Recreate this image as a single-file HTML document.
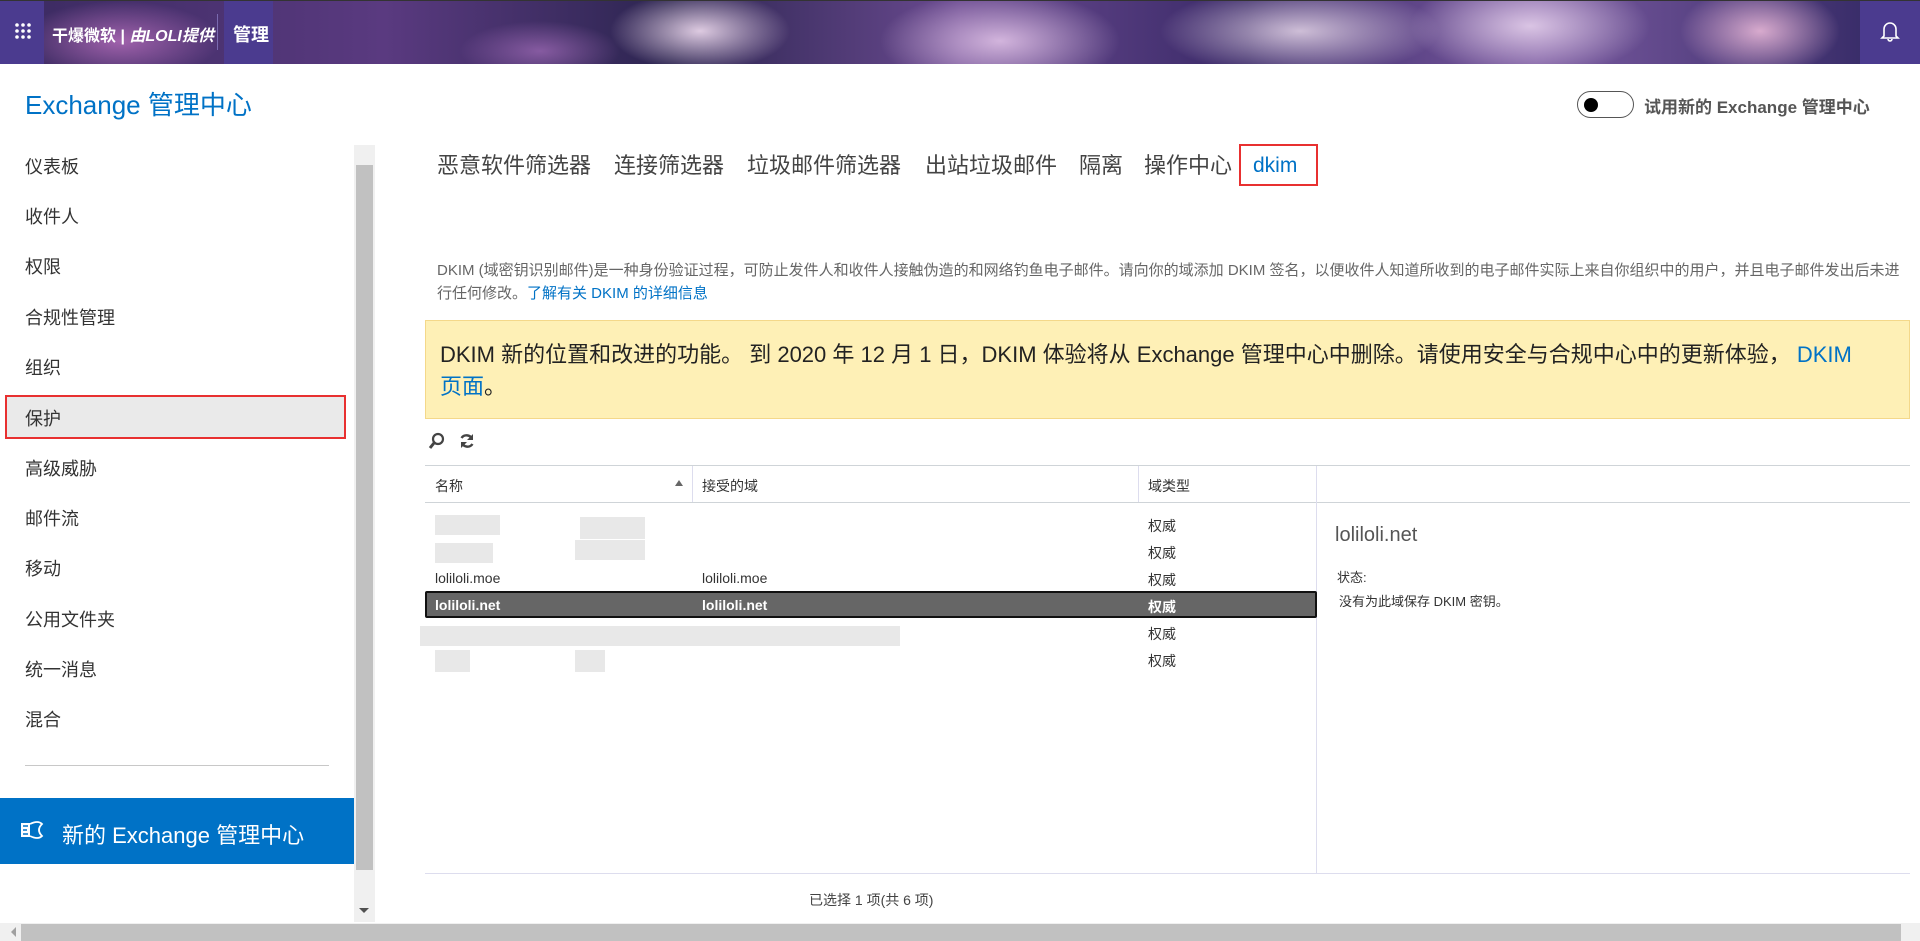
<!DOCTYPE html>
<html><head><meta charset="utf-8"><style>
*{margin:0;padding:0;box-sizing:border-box}
body{width:1920px;height:941px;overflow:hidden;background:#fff;font-family:"Liberation Sans","Noto Sans CJK SC",sans-serif;color:#333;position:relative}
.abs{position:absolute}
#hdr{left:0;top:0;width:1920px;height:64px;border-top:1px solid #333;
background:
radial-gradient(ellipse 90px 40px at 700px 30px,rgba(240,220,240,.9),transparent),
radial-gradient(ellipse 120px 50px at 1000px 40px,rgba(230,200,235,.85),transparent),
radial-gradient(ellipse 140px 45px at 1300px 30px,rgba(240,225,240,.8),transparent),
radial-gradient(ellipse 120px 50px at 1530px 25px,rgba(235,215,240,.85),transparent),
radial-gradient(ellipse 80px 45px at 1760px 30px,rgba(240,190,220,.85),transparent),
radial-gradient(ellipse 100px 40px at 120px 40px,rgba(200,120,200,.7),transparent),
radial-gradient(ellipse 80px 30px at 540px 50px,rgba(180,120,200,.6),transparent),
linear-gradient(90deg,#3a2a60,#5a3a80 20%,#2c2550 35%,#6a4a90 50%,#3a2a68 65%,#7a5aa0 80%,#2e2560)}
.tile{background:#4b3b8f;height:63px;top:1px}
.nav{left:25px;font-size:18px;color:#333}
.tab{top:148px;font-size:22px;color:#444}
.cell{font-size:14px;color:#333}
.blur{background:#e6e6e6;opacity:.9}
</style></head><body>
<div id="hdr" class="abs"></div>
<div class="abs tile" style="left:0;width:44px"></div>
<svg class="abs" style="left:14px;top:22px" width="18" height="18"><g fill="#fff"><circle cx="3" cy="3" r="1.8"/><circle cx="9" cy="3" r="1.8"/><circle cx="15" cy="3" r="1.8"/><circle cx="3" cy="9" r="1.8"/><circle cx="9" cy="9" r="1.8"/><circle cx="15" cy="9" r="1.8"/><circle cx="3" cy="15" r="1.8"/><circle cx="9" cy="15" r="1.8"/><circle cx="15" cy="15" r="1.8"/></g></svg>
<div class="abs" style="left:52px;top:22px;font-size:16px;color:#fff;font-weight:bold;white-space:nowrap">干爆微软 | <i>由LOLI提供</i></div>
<div class="abs" style="left:217px;top:14px;width:1px;height:36px;background:#7a6ab0"></div>
<div class="abs tile" style="left:224px;width:49px"></div>
<div class="abs" style="left:233px;top:21px;font-size:18px;color:#fff;font-weight:bold">管理</div>
<div class="abs tile" style="left:1860px;width:60px"></div>
<svg class="abs" style="left:1880px;top:20px" width="20" height="22" viewBox="0 0 20 22"><path d="M4 16V9a6 6 0 0 1 12 0v7l2 2H2z M8 19a2 2 0 0 0 4 0" fill="none" stroke="#fff" stroke-width="1.6"/></svg>

<div class="abs" style="left:25px;top:85px;font-size:26px;color:#0072c6">Exchange 管理中心</div>
<div class="abs" style="left:1577px;top:91px;width:57px;height:27px;border:1px solid #555;border-radius:14px"></div>
<div class="abs" style="left:1584px;top:98px;width:14px;height:14px;border-radius:50%;background:#000"></div>
<div class="abs" style="left:1644px;top:93px;font-size:17px;font-weight:bold;color:#555">试用新的 Exchange 管理中心</div>

<div class="abs nav" style="top:153px">仪表板</div>
<div class="abs nav" style="top:203px">收件人</div>
<div class="abs nav" style="top:253px">权限</div>
<div class="abs nav" style="top:304px">合规性管理</div>
<div class="abs nav" style="top:354px">组织</div>
<div class="abs" style="left:5px;top:395px;width:341px;height:44px;background:#eaeaea;border:2px solid #e83030"></div>
<div class="abs nav" style="top:405px">保护</div>
<div class="abs nav" style="top:455px">高级威胁</div>
<div class="abs nav" style="top:505px">邮件流</div>
<div class="abs nav" style="top:555px">移动</div>
<div class="abs nav" style="top:606px">公用文件夹</div>
<div class="abs nav" style="top:656px">统一消息</div>
<div class="abs nav" style="top:706px">混合</div>
<div class="abs" style="left:25px;top:765px;width:304px;height:1px;background:#c8c8c8"></div>
<div class="abs" style="left:0;top:798px;width:354px;height:66px;background:#0072c6"></div>
<svg class="abs" style="left:20px;top:820px" width="24" height="20" viewBox="0 0 24 20"><rect x="1" y="3" width="9" height="14" fill="#fff"/><path d="M3 6h5M3 10h4M3 14h5" stroke="#0072c6" stroke-width="1.5"/><path d="M10 4 Q18 0 22 4 Q16 10 22 16 Q18 20 10 16" fill="none" stroke="#fff" stroke-width="1.8"/></svg>
<div class="abs" style="left:62px;top:818px;font-size:22px;color:#fff">新的 Exchange 管理中心</div>
<div class="abs" style="left:354px;top:145px;width:21px;height:777px;background:#f0f0f0"></div>
<div class="abs" style="left:356px;top:165px;width:17px;height:705px;background:#c1c1c1"></div>
<div class="abs" style="left:359px;top:908px;border:5px solid transparent;border-top:5px solid #505050"></div>
<div class="abs" style="left:0;top:923px;width:1920px;height:18px;background:#f0f0f0"></div>
<div class="abs" style="left:21px;top:924px;width:1880px;height:17px;background:#c1c1c1"></div>
<div class="abs" style="left:6px;top:927px;border:5px solid transparent;border-right:5px solid #a0a0a0"></div>

<div class="abs tab" style="left:437px">恶意软件筛选器</div>
<div class="abs tab" style="left:614px">连接筛选器</div>
<div class="abs tab" style="left:747px">垃圾邮件筛选器</div>
<div class="abs tab" style="left:925px">出站垃圾邮件</div>
<div class="abs tab" style="left:1079px">隔离</div>
<div class="abs tab" style="left:1144px">操作中心</div>
<div class="abs" style="left:1239px;top:144px;width:79px;height:42px;border:2px solid #e83030"></div>
<div class="abs" style="left:1253px;top:154px;font-size:21px;color:#0072c6">dkim</div>

<div class="abs" style="left:437px;top:259px;width:1480px;font-size:15px;line-height:23px;color:#666;white-space:nowrap">DKIM (域密钥识别邮件)是一种身份验证过程，可防止发件人和收件人接触伪造的和网络钓鱼电子邮件。请向你的域添加 DKIM 签名，以便收件人知道所收到的电子邮件实际上来自你组织中的用户，并且电子邮件发出后未进<br>行任何修改。<span style="color:#0072c6">了解有关 DKIM 的详细信息</span></div>

<div class="abs" style="left:425px;top:320px;width:1485px;height:99px;background:#fef0b6;border:1px solid #f4d88a"></div>
<div class="abs" style="left:440px;top:339px;width:1462px;font-size:22px;line-height:32px;color:#222;white-space:nowrap">DKIM 新的位置和改进的功能。 到 2020 年 12 月 1 日，DKIM 体验将从 Exchange 管理中心中删除。请使用安全与合规中心中的更新体验， <span style="color:#0072c6">DKIM<br>页面</span>。</div>

<svg class="abs" style="left:428px;top:432px" width="18" height="18" viewBox="0 0 18 18"><circle cx="10" cy="7" r="5" fill="none" stroke="#444" stroke-width="2.2"/><path d="M6 11 2 16" stroke="#444" stroke-width="3"/></svg>
<svg class="abs" style="left:458px;top:432px" width="18" height="18" viewBox="0 0 18 18"><path d="M14 7A6 6 0 0 0 3.5 6M4 11a6 6 0 0 0 10.5 1" fill="none" stroke="#444" stroke-width="2.4"/><path d="M15 2v6H9z M3 16v-6h6z" fill="#444"/></svg>

<div class="abs" style="left:425px;top:465px;width:1485px;height:1px;background:#cfd4d8"></div>
<div class="abs" style="left:425px;top:502px;width:1485px;height:1px;background:#cfd4d8"></div>
<div class="abs" style="left:692px;top:466px;width:1px;height:36px;background:#dde"></div>
<div class="abs" style="left:1138px;top:466px;width:1px;height:36px;background:#dde"></div>
<div class="abs" style="left:1316px;top:466px;width:1px;height:408px;background:#dde"></div>
<div class="abs" style="left:425px;top:873px;width:1485px;height:1px;background:#dde"></div>
<div class="abs cell" style="left:435px;top:476px">名称</div>
<div class="abs" style="left:675px;top:480px;border:4px solid transparent;border-bottom:6px solid #666;border-top:0"></div>
<div class="abs cell" style="left:702px;top:476px">接受的域</div>
<div class="abs cell" style="left:1148px;top:476px">域类型</div>

<div class="abs blur" style="left:435px;top:515px;width:65px;height:20px"></div>
<div class="abs blur" style="left:580px;top:517px;width:65px;height:22px"></div>
<div class="abs blur" style="left:435px;top:543px;width:58px;height:20px"></div>
<div class="abs blur" style="left:575px;top:540px;width:70px;height:20px"></div>
<div class="abs blur" style="left:420px;top:626px;width:480px;height:20px"></div>
<div class="abs blur" style="left:435px;top:650px;width:35px;height:22px"></div>
<div class="abs blur" style="left:575px;top:650px;width:30px;height:22px"></div>
<div class="abs cell" style="left:1148px;top:516px">权威</div>
<div class="abs cell" style="left:1148px;top:543px">权威</div>
<div class="abs cell" style="left:435px;top:570px">loliloli.moe</div>
<div class="abs cell" style="left:702px;top:570px">loliloli.moe</div>
<div class="abs cell" style="left:1148px;top:570px">权威</div>
<div class="abs" style="left:425px;top:591px;width:892px;height:27px;background:#666;border:2px solid #111;border-radius:2px"></div>
<div class="abs cell" style="left:435px;top:597px;color:#fff;font-weight:bold">loliloli.net</div>
<div class="abs cell" style="left:702px;top:597px;color:#fff;font-weight:bold">loliloli.net</div>
<div class="abs cell" style="left:1148px;top:597px;color:#fff;font-weight:bold">权威</div>
<div class="abs cell" style="left:1148px;top:624px">权威</div>
<div class="abs cell" style="left:1148px;top:651px">权威</div>

<div class="abs" style="left:1335px;top:524px;font-size:20px;color:#555">loliloli.net</div>
<div class="abs" style="left:1337px;top:567px;font-size:13px;color:#333">状态:</div>
<div class="abs" style="left:1339px;top:591px;font-size:13px;color:#333">没有为此域保存 DKIM 密钥。</div>
<div class="abs" style="left:809px;top:890px;font-size:14px;color:#444">已选择 1 项(共 6 项)</div>
</body></html>
